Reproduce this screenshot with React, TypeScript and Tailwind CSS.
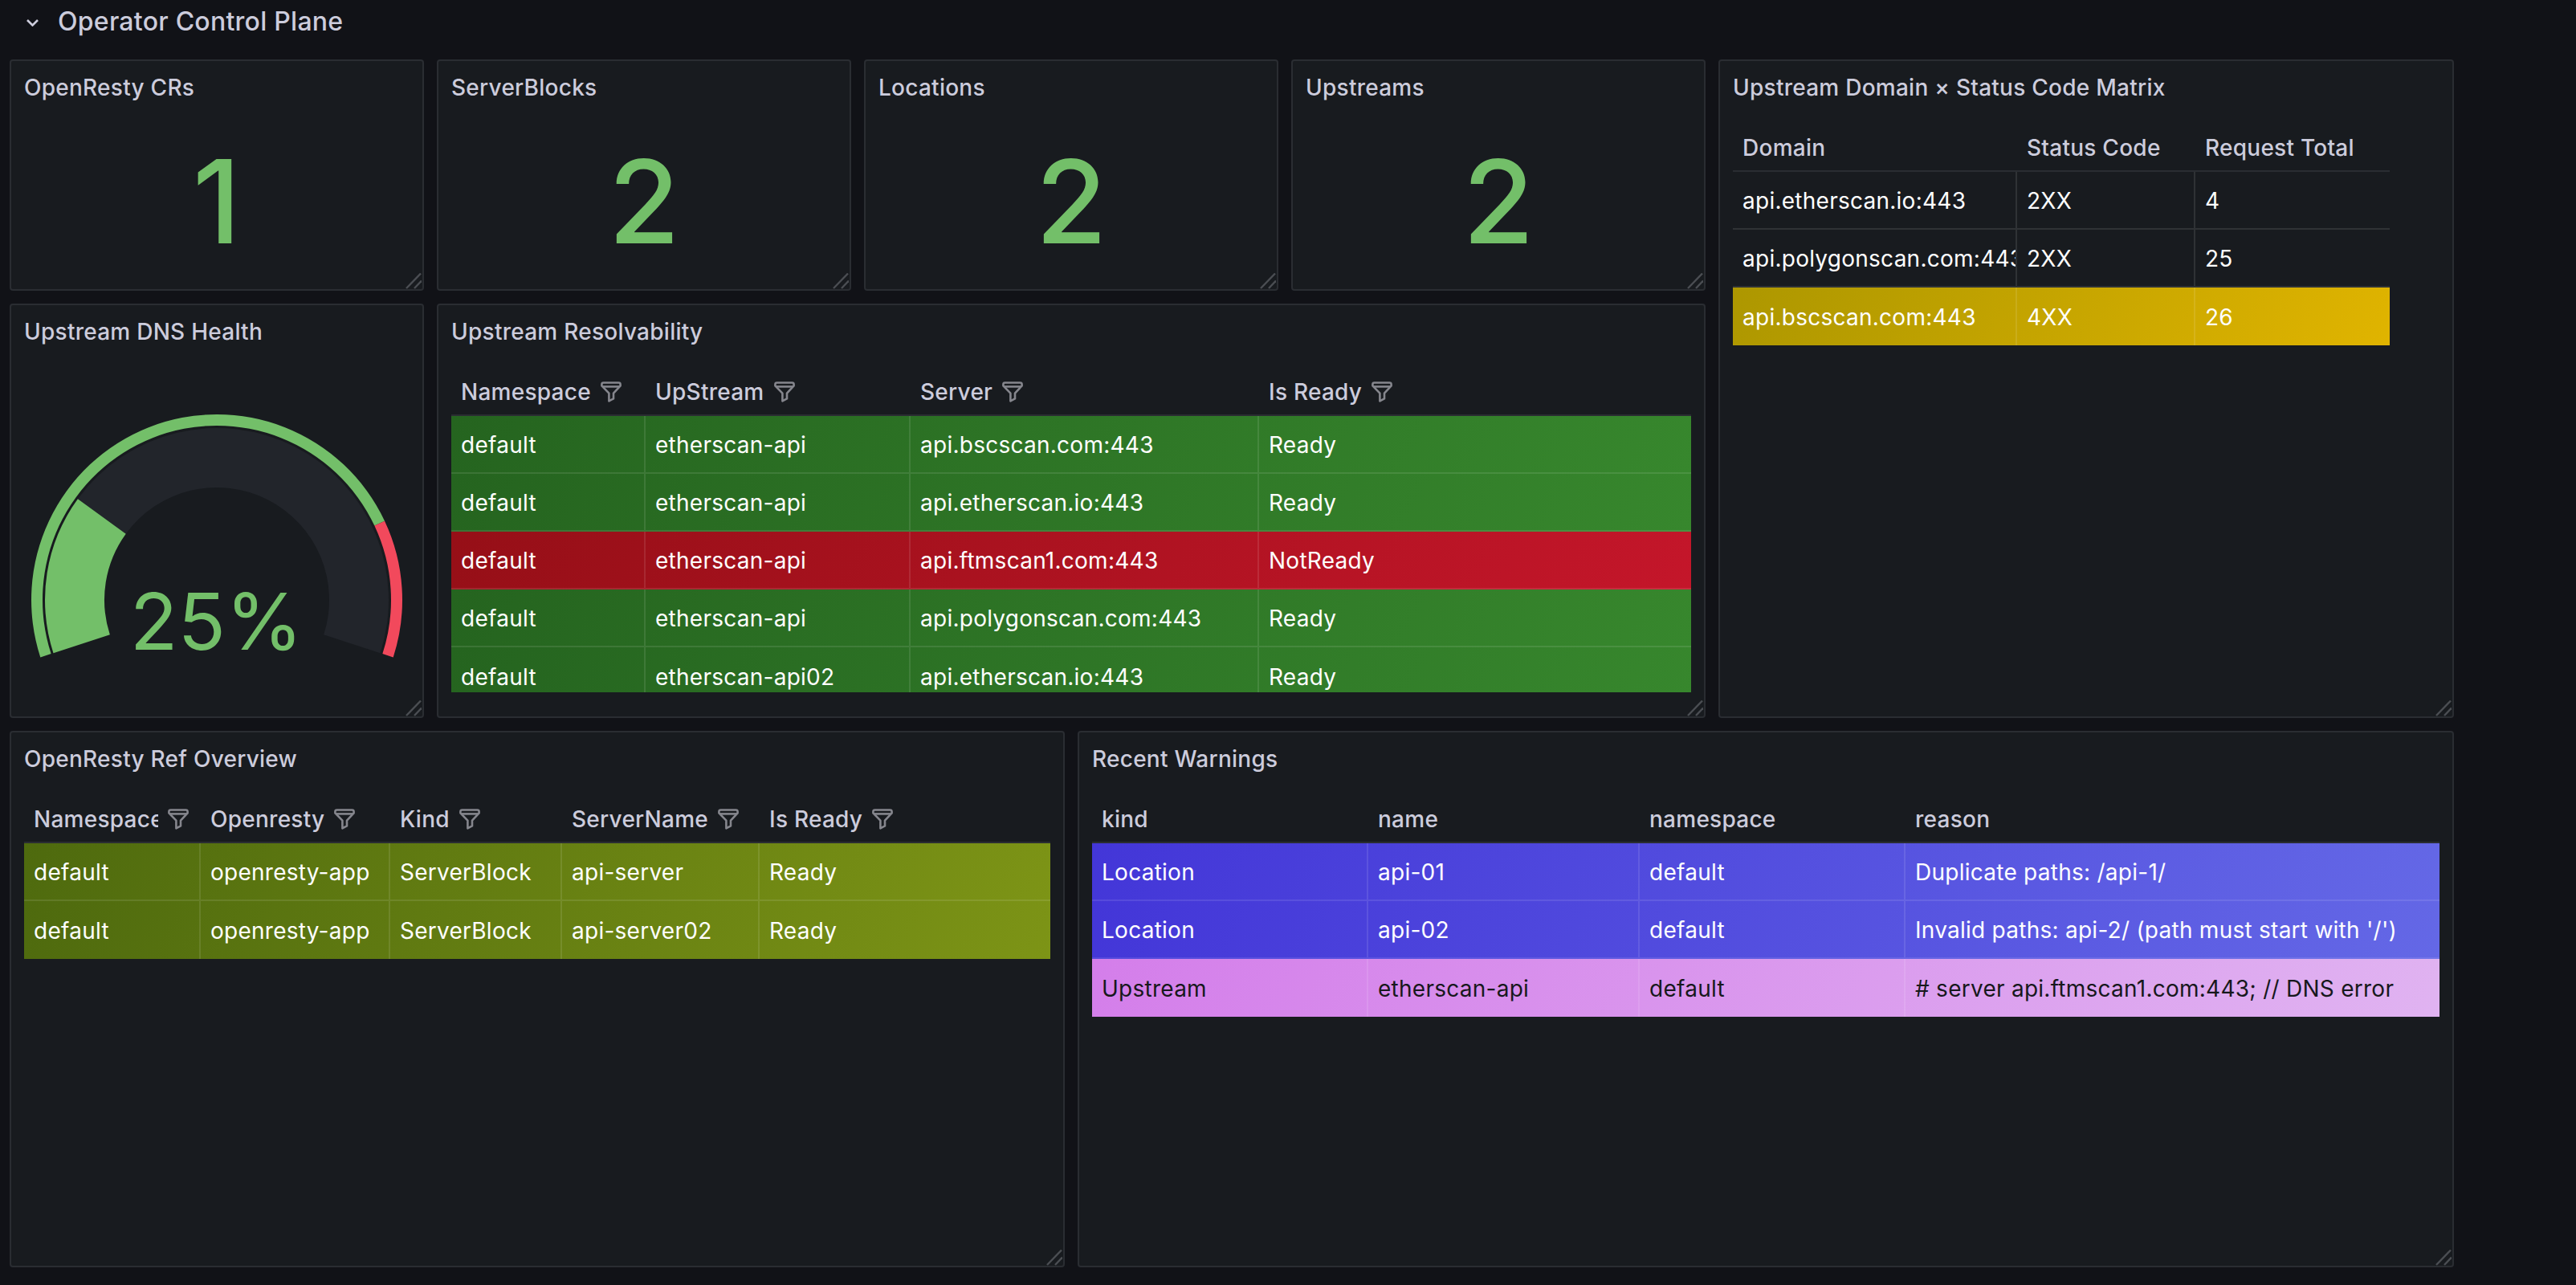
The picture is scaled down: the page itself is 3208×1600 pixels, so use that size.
import type { ReactNode } from 'react';

type Row = { cells: string[]; bg: string; dark?: boolean };

const green = 'bg-[linear-gradient(120deg,#25641f,#37872d)]';
const red = 'bg-[linear-gradient(120deg,#960f17,#c4162a)]';
const yellow = 'bg-[linear-gradient(120deg,#ad9700,#e0b400)]';
const olive = 'bg-[linear-gradient(120deg,#4e6a0e,#7d9416)]';
const blue = 'bg-[linear-gradient(120deg,#4336d8,#6468e6)]';
const pink = 'bg-[linear-gradient(120deg,#d47eea,#e0b3f1)]';

function FilterIcon() {
  return (
    <svg width="26" height="26" viewBox="0 0 26 26" fill="none" stroke="#85868d" strokeWidth="2.6" strokeLinejoin="round" className="shrink-0">
      <path d="M3.5 1.5H22.5Q24.6 1.5 24.6 3.6V5.4L16 14.6V21.4L10.4 24.4V14.6L1.4 5.4V3.6Q1.4 1.5 3.5 1.5Z" />
      <path d="M2.6 6.4H23.4" />
    </svg>
  );
}

function ResizeHandle() {
  return (
    <svg width="20" height="20" viewBox="0 0 20 20" fill="none" stroke="#4b4e53" strokeWidth="2.4" className="absolute right-[1px] bottom-0">
      <path d="M1 19L19 0.5" />
      <path d="M11 19L20 9.5" />
    </svg>
  );
}

function Panel({ title, className, children }: { title: string; className: string; children?: ReactNode }) {
  return (
    <div className={`relative flex flex-col rounded-[4px] border-2 border-[#2a2d32] bg-[#181b1f] ${className}`}>
      <div className="flex h-[66px] shrink-0 items-center px-4 text-[28px] font-medium text-[#ccccdc]">{title}</div>
      {children}
      <ResizeHandle />
    </div>
  );
}

function Stat({ title, value }: { title: string; value: string }) {
  return (
    <Panel title={title} className="h-[288px]">
      <div className="flex flex-1 items-center justify-center text-[144px] leading-none font-medium tracking-normal text-[#73bf69]">{value}</div>
    </Panel>
  );
}

function DataTable({ columns, grid, rows, filters, className = '' }: { columns: string[]; grid: string; rows: Row[]; filters?: boolean; className?: string }) {
  return (
    <div className={`overflow-hidden text-[28px] ${className}`}>
      <div className={`grid h-[72px] border-b-2 border-[#2a2d32] ${grid}`}>
        {columns.map((col) => (
          <div key={col} className="flex min-w-0 items-center gap-3 pt-[13px] pr-[15px] pl-3 font-medium text-[#ccccdc]">
            <span className="min-w-0 overflow-hidden whitespace-nowrap">{col}</span>
            {filters && <FilterIcon />}
          </div>
        ))}
      </div>
      {rows.map((row, i) => (
        <div key={i} className={`grid h-[72px] border-b-2 border-white/10 last:border-b-0 ${grid} ${row.bg} ${row.dark ? 'text-[#17181c]' : 'text-white'}`}>
          {row.cells.map((cell, j) => (
            <div key={j} className="flex min-w-0 items-center overflow-hidden border-r-2 border-white/10 px-3 pt-[2px] whitespace-nowrap last:border-r-0">
              {cell}
            </div>
          ))}
        </div>
      ))}
    </div>
  );
}

// angle in degrees, 0 = right, counter clockwise
function band(from: number, to: number, inner: number, outer: number) {
  const cx = 256;
  const cy = 301;
  const pt = (r: number, a: number) => {
    const rad = (a * Math.PI) / 180;
    return `${(cx + r * Math.cos(rad)).toFixed(2)} ${(cy - r * Math.sin(rad)).toFixed(2)}`;
  };
  const large = from - to > 180 ? 1 : 0;
  return `M${pt(outer, from)}A${outer} ${outer} 0 ${large} 1 ${pt(outer, to)}L${pt(inner, to)}A${inner} ${inner} 0 ${large} 0 ${pt(inner, from)}Z`;
}

function Gauge() {
  return (
    <div className="relative flex-1">
      <svg width="512" height="446" viewBox="0 0 512 446">
        <path d={band(144, -18, 140, 214)} fill="#22252b" />
        <path d={band(198, 144, 140, 214)} fill="#73bf69" />
        <path d={band(198, 25.2, 217, 231)} fill="#73bf69" />
        <path d={band(25.2, -18, 217, 231)} fill="#f2495c" />
      </svg>
      <div className="absolute top-[270px] right-[1px] left-0 text-center text-[98px] leading-[116px] tracking-normal text-[#73bf69]">25%</div>
    </div>
  );
}

const resolvability: Row[] = [
  { cells: ['default', 'etherscan-api', 'api.bscscan.com:443', 'Ready'], bg: green },
  { cells: ['default', 'etherscan-api', 'api.etherscan.io:443', 'Ready'], bg: green },
  { cells: ['default', 'etherscan-api', 'api.ftmscan1.com:443', 'NotReady'], bg: red },
  { cells: ['default', 'etherscan-api', 'api.polygonscan.com:443', 'Ready'], bg: green },
  { cells: ['default', 'etherscan-api02', 'api.etherscan.io:443', 'Ready'], bg: green },
];

const matrix: Row[] = [
  { cells: ['api.etherscan.io:443', '2XX', '4'], bg: '' },
  { cells: ['api.polygonscan.com:443', '2XX', '25'], bg: '' },
  { cells: ['api.bscscan.com:443', '4XX', '26'], bg: yellow },
];

const refs: Row[] = [
  { cells: ['default', 'openresty-app', 'ServerBlock', 'api-server', 'Ready'], bg: olive },
  { cells: ['default', 'openresty-app', 'ServerBlock', 'api-server02', 'Ready'], bg: olive },
];

const warnings: Row[] = [
  { cells: ['Location', 'api-01', 'default', 'Duplicate paths: /api-1/'], bg: blue },
  { cells: ['Location', 'api-02', 'default', "Invalid paths: api-2/ (path must start with '/')"], bg: blue },
  { cells: ['Upstream', 'etherscan-api', 'default', '# server api.ftmscan1.com:443; // DNS error'], bg: pink, dark: true },
];

export default function App() {
  return (
    <div className="h-[1600px] w-[3208px] overflow-hidden bg-[#111217] px-3 font-[Inter,sans-serif] tracking-[0.016em]">
      <div className="flex h-[54px] items-center gap-[24px] pl-[21px] text-[32px] font-medium text-[#ccccdc]">
        <svg width="15" height="9" viewBox="0 0 15 9" fill="none" stroke="#ccccdc" strokeWidth="2.6" className="mt-[2px]">
          <path d="M1 1L7.5 7.5L14 1" />
        </svg>
        <span>Operator Control Plane</span>
      </div>

      <div className="mt-5 flex h-[820px] gap-4">
        <div className="flex w-[2112px] flex-col gap-4">
          <div className="grid grid-cols-4 gap-4">
            <Stat title="OpenResty CRs" value="1" />
            <Stat title="ServerBlocks" value="2" />
            <Stat title="Locations" value="2" />
            <Stat title="Upstreams" value="2" />
          </div>
          <div className="flex h-[516px] gap-4">
            <Panel title="Upstream DNS Health" className="w-[516px]">
              <Gauge />
            </Panel>
            <Panel title="Upstream Resolvability" className="flex-1">
              <div className="px-4">
                <DataTable
                  columns={['Namespace', 'UpStream', 'Server', 'Is Ready']}
                  grid="grid-cols-[242px_330px_434px_1fr]"
                  rows={resolvability}
                  filters
                  className="h-[416px]"
                />
              </div>
            </Panel>
          </div>
        </div>
        <Panel title="Upstream Domain × Status Code Matrix" className="w-[916px]">
          <div className="px-4">
            <DataTable
              columns={['Domain', 'Status Code', 'Request Total']}
              grid="grid-cols-[354px_222px_242px]"
              rows={matrix}
              className="w-[818px]"
            />
          </div>
        </Panel>
      </div>

      <div className="mt-4 flex h-[668px] gap-4">
        <Panel title="OpenResty Ref Overview" className="w-[1314px]">
          <div className="px-4">
            <DataTable
              columns={['Namespace', 'Openresty', 'Kind', 'ServerName', 'Is Ready']}
              grid="grid-cols-[220px_236px_214px_246px_1fr]"
              rows={refs}
              filters
            />
          </div>
        </Panel>
        <Panel title="Recent Warnings" className="w-[1714px]">
          <div className="px-4">
            <DataTable
              columns={['kind', 'name', 'namespace', 'reason']}
              grid="grid-cols-[344px_338px_331px_1fr]"
              rows={warnings}
            />
          </div>
        </Panel>
      </div>
    </div>
  );
}
